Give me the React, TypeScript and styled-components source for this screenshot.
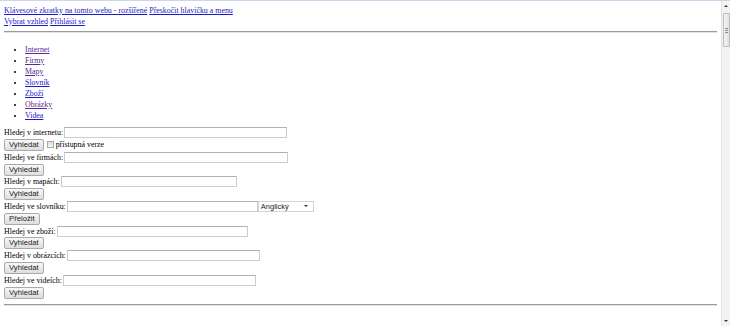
import React from "react";
import styled, { createGlobalStyle } from "styled-components";

const Global = createGlobalStyle`
  html, body { margin: 0; padding: 0; background: #fff; overflow: hidden; }
  body {
    font-family: "Liberation Serif", "Times New Roman", serif;
    font-size: 7.9px;
    color: #000;
  }
`;

const Frame = styled.div`
  display: flex;
  height: 326px;
  border-top: 1px solid #c9d7ec;
  box-sizing: border-box;
`;

const Page = styled.div`
  flex: 1;
  min-width: 0;
  padding: 3.5px 4px 0 4px;
`;

const Header = styled.div`
  line-height: 11px;
  white-space: nowrap;
`;

const HeaderLine = styled.div`
  height: 11px;
`;

const Link = styled.a<{ $visited?: boolean }>`
  color: ${(p) => (p.$visited ? "#5a2a96" : "#1a1ac8")};
  text-decoration: underline;
`;

const Rule = styled.hr<{ $top: number }>`
  height: 0;
  margin: ${(p) => p.$top}px 0 0 0;
  border: 0;
  border-top: 1px solid #9c9c9c;
  border-bottom: 1px solid #e2e2e2;
`;

const Menu = styled.ul`
  margin: 10.5px 0 6px 0;
  padding: 0 0 0 21px;
  list-style: disc;
  line-height: 11px;
`;

const MenuItem = styled.li`
  height: 11px;
`;

const Form = styled.div`
  display: flex;
  flex-direction: column;
`;

const Row = styled.div`
  height: 12.3px;
  display: flex;
  align-items: center;
  white-space: nowrap;
`;

const Label = styled.label`
  line-height: 11px;
`;

const TextInput = styled.input<{ $w: number }>`
  width: ${(p) => p.$w}px;
  height: 11px;
  box-sizing: border-box;
  margin: 0 0 0 1px;
  padding: 0;
  border: 1px solid #cdcdcd;
  border-top-color: #b0b0b0;
  background: #fff;
  outline: none;
`;

const Button = styled.button`
  height: 12px;
  box-sizing: border-box;
  margin: 0;
  padding: 0 4px;
  font-family: "Liberation Sans", Arial, sans-serif;
  font-size: 7.7px;
  line-height: 10px;
  color: #222;
  border: 1px solid #a9a9a9;
  border-radius: 2px;
  background: linear-gradient(#f7f7f7, #dedede);
`;

const Check = styled.input`
  appearance: none;
  width: 7px;
  height: 7px;
  margin: 0 2px 0 3px;
  border: 1px solid #a8a8a8;
  box-sizing: border-box;
  background: linear-gradient(#dedede, #f8f8f8);
`;

const CheckLabel = styled.span`
  line-height: 11px;
`;

const SelectWrap = styled.span`
  position: relative;
  display: inline-flex;
`;

const Select = styled.select`
  appearance: none;
  width: 56px;
  height: 11px;
  box-sizing: border-box;
  margin: 0;
  padding: 0 0 0 2px;
  font-family: "Liberation Sans", Arial, sans-serif;
  font-size: 7.5px;
  line-height: 9px;
  color: #222;
  border: 1px solid #d4d4d4;
  background: #fff;
  outline: none;
`;

const SelectArrow = styled.span`
  position: absolute;
  right: 6px;
  top: 4px;
  width: 0;
  height: 0;
  border-left: 2px solid transparent;
  border-right: 2px solid transparent;
  border-top: 2px solid #333;
  pointer-events: none;
`;

const Scrollbar = styled.div`
  width: 9px;
  display: flex;
  flex-direction: column;
  background: #f3f3f3;
  border-left: 1px solid #e2e2e2;
  box-sizing: border-box;
`;

const ScrollArrow = styled.div<{ $down?: boolean }>`
  height: 10px;
  display: flex;
  align-items: center;
  justify-content: center;
  &::after {
    content: "";
    width: 0;
    height: 0;
    border-left: 2px solid transparent;
    border-right: 2px solid transparent;
    ${(p) =>
      p.$down
        ? "border-top: 2px solid #333;"
        : "border-bottom: 2px solid #333;"}
  }
`;

const Thumb = styled.div`
  margin: 2px 0 0 1px;
  width: 7px;
  height: 34px;
  box-sizing: border-box;
  border: 1px solid #bcbcbc;
  border-radius: 1px;
  background: linear-gradient(90deg, #f4f4f4, #e2e2e2);
  display: flex;
  flex-direction: column;
  align-items: center;
  justify-content: center;
  gap: 1px;
`;

const Grip = styled.div`
  width: 3px;
  height: 1px;
  background: #8a8a8a;
`;

const Track = styled.div`
  flex: 1;
`;

const menu = [
  { t: "Internet", v: true },
  { t: "Firmy", v: true },
  { t: "Mapy", v: true },
  { t: "Slovník", v: false },
  { t: "Zboží", v: false },
  { t: "Obrázky", v: true },
  { t: "Videa", v: false },
];

type Field = {
  label: string;
  w: number;
  button: string;
  extra?: "check" | "select";
};

const fields: Field[] = [
  { label: "Hledej v internetu:", w: 223, button: "Vyhledat", extra: "check" },
  { label: "Hledej ve firmách:", w: 224, button: "Vyhledat" },
  { label: "Hledej v mapách:", w: 176, button: "Vyhledat" },
  { label: "Hledej ve slovníku:", w: 191, button: "Přeložit", extra: "select" },
  { label: "Hledej ve zboží:", w: 191, button: "Vyhledat" },
  { label: "Hledej v obrázcích:", w: 193, button: "Vyhledat" },
  { label: "Hledej ve videích:", w: 193, button: "Vyhledat" },
];

export default function App() {
  return (
    <>
      <Global />
      <Frame>
        <Page>
          <Header>
            <HeaderLine>
              <Link href="#">Klávesové zkratky na tomto webu - rozšířené</Link>{" "}
              <Link href="#">Přeskočit hlavičku a menu</Link>
            </HeaderLine>
            <HeaderLine>
              <Link href="#">Vybrat vzhled</Link> <Link href="#">Přihlásit se</Link>
            </HeaderLine>
          </Header>
          <Rule $top={4.5} />
          <Menu>
            {menu.map((m) => (
              <MenuItem key={m.t}>
                <Link href="#" $visited={m.v}>
                  {m.t}
                </Link>
              </MenuItem>
            ))}
          </Menu>
          <Form>
            {fields.map((f) => (
              <React.Fragment key={f.label}>
                <Row>
                  <Label>{f.label}</Label>
                  <TextInput type="text" $w={f.w} />
                  {f.extra === "select" && (
                    <SelectWrap>
                      <Select defaultValue="en">
                        <option value="en">Anglický</option>
                      </Select>
                      <SelectArrow />
                    </SelectWrap>
                  )}
                </Row>
                <Row>
                  <Button type="button">{f.button}</Button>
                  {f.extra === "check" && (
                    <>
                      <Check type="checkbox" />
                      <CheckLabel>přístupná verze</CheckLabel>
                    </>
                  )}
                </Row>
              </React.Fragment>
            ))}
          </Form>
          <Rule $top={5} />
        </Page>
        <Scrollbar>
          <ScrollArrow />
          <Thumb>
            <Grip />
            <Grip />
            <Grip />
          </Thumb>
          <Track />
          <ScrollArrow $down />
        </Scrollbar>
      </Frame>
    </>
  );
}
